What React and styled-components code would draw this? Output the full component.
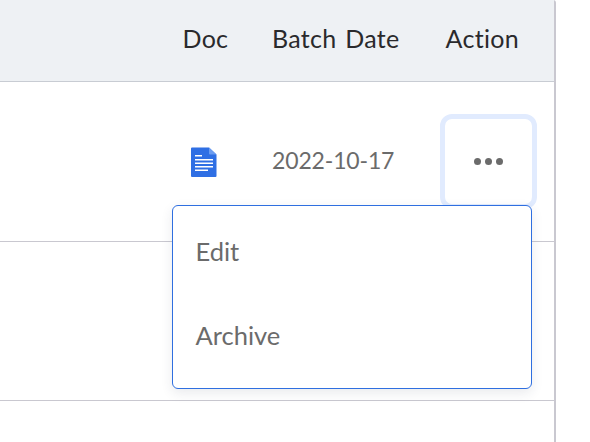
import React from "react";
import styled, { createGlobalStyle } from "styled-components";

const Global = createGlobalStyle`
  html, body { margin: 0; padding: 0; background: #fff; }
  body { font-family: "Lato", "Liberation Sans", sans-serif; overflow: hidden; }
`;

const Page = styled.div`
  width: 590px;
  height: 442px;
  overflow: hidden;
`;

const Table = styled.div`
  position: relative;
  width: 554px;
  height: 442px;
  border-right: 2px solid #c9c8d0;
  border-top-right-radius: 3px;
`;

const columns = "182.5px 89.5px 173.5px 108.5px";

const HeaderRow = styled.div`
  display: grid;
  grid-template-columns: ${columns};
  align-items: center;
  height: 81px;
  background: #eef1f4;
  border-bottom: 1px solid #c8ccd3;
`;

const HeaderCell = styled.div`
  font-size: 25px;
  font-weight: 400;
  letter-spacing: 0.3px;
  word-spacing: 2px;
  color: #2a2a2c;
  padding-bottom: 6px;
`;

const Row = styled.div`
  display: grid;
  grid-template-columns: ${columns};
  align-items: center;
  height: ${(p) => p.$height}px;
  border-bottom: 1px solid #c9c8d0;
`;

const DateCell = styled.div`
  font-size: 23px;
  color: #6b6b6b;
  letter-spacing: -0.15px;
  padding-bottom: 3px;
`;

const DocIcon = styled.svg`
  display: block;
  width: 26px;
  height: 30px;
  margin-left: 8.5px;
`;

const ActionButton = styled.button`
  box-sizing: border-box;
  width: 97px;
  height: 95px;
  margin-left: -5.5px;
  padding: 0;
  display: flex;
  align-items: center;
  justify-content: center;
  gap: 3.7px;
  background: #fff;
  border: 5px solid #e1ebfe;
  border-radius: 12px;
`;

const Dot = styled.span`
  width: 7px;
  height: 7px;
  border-radius: 50%;
  background: #6b6b6b;
`;

const Menu = styled.div`
  position: absolute;
  left: 172px;
  top: 205px;
  box-sizing: border-box;
  width: 360px;
  height: 184px;
  padding: 4px 0;
  background: #fff;
  border: 1px solid #2f6fe0;
  border-radius: 6px;
  box-shadow: 0 4px 12px rgba(40, 50, 80, 0.1);
`;

const MenuItem = styled.div`
  display: flex;
  align-items: center;
  height: 84px;
  padding-left: 22.5px;
  padding-bottom: 2px;
  box-sizing: border-box;
  font-size: 25.5px;
  color: #6b6b6b;
`;

function GoogleDoc() {
  return (
    <DocIcon viewBox="0 0 26 30" aria-hidden="true">
      <path d="M0 1.5A1 1 0 0 1 1 .5h17l7.5 7V29a1 1 0 0 1-1 1H1a1 1 0 0 1-1-1z" fill="#2f6fe4" />
      <path d="M18 .5l7.5 7H19a1 1 0 0 1-1-1z" fill="#6b9cf0" />
      <g fill="#fff">
        <rect x="4" y="8" width="7" height="1.5" />
        <rect x="4" y="12" width="18" height="1.5" />
        <rect x="4" y="15.5" width="18" height="1.5" />
        <rect x="4" y="19" width="18" height="1.5" />
        <rect x="4" y="22.5" width="13" height="1.5" />
      </g>
    </DocIcon>
  );
}

export default function App() {
  return (
    <Page>
      <Global />
      <Table>
        <HeaderRow>
          <span />
          <HeaderCell>Doc</HeaderCell>
          <HeaderCell>Batch Date</HeaderCell>
          <HeaderCell>Action</HeaderCell>
        </HeaderRow>
        <Row $height={159}>
          <span />
          <GoogleDoc />
          <DateCell>2022-10-17</DateCell>
          <ActionButton aria-label="Actions">
            <Dot />
            <Dot />
            <Dot />
          </ActionButton>
        </Row>
        <Row $height={158} />
        <Menu>
          <MenuItem>Edit</MenuItem>
          <MenuItem>Archive</MenuItem>
        </Menu>
      </Table>
    </Page>
  );
}
